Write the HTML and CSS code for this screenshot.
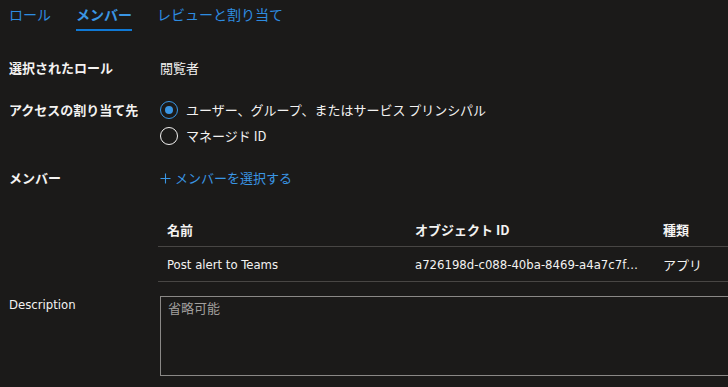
FILE: index.html
```html
<!DOCTYPE html>
<html lang="ja">
<head>
<meta charset="utf-8">
<link rel="stylesheet" href="styles.css">
</head>
<body>
<div class="page">
  <nav class="tabs">
    <span class="tab">ロール</span>
    <span class="tab active">メンバー</span>
    <span class="tab">レビューと割り当て</span>
  </nav>

  <div class="form">
    <div class="row r1">
      <div class="label">選択されたロール</div>
      <div class="value">閲覧者</div>
    </div>

    <div class="row r2">
      <div class="label">アクセスの割り当て先</div>
      <div class="value radios">
        <label class="radio"><span class="dot checked"></span>ユーザー、グループ、またはサービス プリンシパル</label>
        <label class="radio"><span class="dot"></span>マネージド ID</label>
      </div>
    </div>

    <div class="row r3">
      <div class="label">メンバー</div>
      <div class="value"><span class="link"><svg class="plus" width="11" height="11" viewBox="0 0 11 11"><path d="M5.5 0.5V10.5M0.5 5.5H10.5" stroke="#3a96e4" stroke-width="1.1" fill="none"/></svg>メンバーを選択する</span></div>
    </div>

    <div class="row r4">
      <div class="label"></div>
      <div class="value">
        <div class="table">
          <div class="tr th">
            <div class="td">名前</div>
            <div class="td">オブジェクト ID</div>
            <div class="td">種類</div>
          </div>
          <div class="tr">
            <div class="td lat">Post alert to Teams</div>
            <div class="td lat">a726198d-c088-40ba-8469-a4a7c7f7123b</div>
            <div class="td">アプリ</div>
          </div>
        </div>
      </div>
    </div>

    <div class="row r5">
      <div class="label desc lat">Description</div>
      <div class="value">
        <div class="textarea">省略可能</div>
      </div>
    </div>
  </div>
</div>
</body>
</html>
```

FILE: styles.css
```css
html, body {
  margin: 0;
  padding: 0;
  background: #1b1a19;
  overflow: hidden;
}
body {
  width: 728px;
  height: 387px;
  font-family: "Noto Sans CJK JP", "Noto Sans", sans-serif;
  font-size: 13px;
  line-height: 20px;
  color: #f3f2f1;
}
.page {
  padding: 0 0 0 9px;
  width: 900px;
}
.tabs {
  display: flex;
  gap: 25px;
}
.tab {
  color: #2e8ce0;
  padding: 4px 0 5px;
  border-bottom: 2px solid transparent;
  font-size: 14px;
}
.tab.active {
  font-weight: 700;
  color: #3a96e4;
  border-bottom-color: #0f78d4;
}
.form {
  display: flex;
  flex-direction: column;
}
.row {
  display: flex;
}
.label {
  width: 151px;
  flex: none;
  font-weight: 700;
}
.value {
  flex: 1;
}
.r1 { margin-top: 27px; }
.r2 { margin-top: 22px; }
.r3 { margin-top: 22px; }
.r4 { margin-top: 25px; }
.r5 { margin-top: 13px; }
.radios {
  display: flex;
  flex-direction: column;
  gap: 6px;
}
.radio {
  display: flex;
  align-items: center;
  gap: 8px;
}
.dot {
  width: 16px;
  height: 16px;
  border: 1px solid #f3f2f1;
  border-radius: 50%;
  display: flex;
  align-items: center;
  justify-content: center;
}
.dot.checked {
  border-color: #3a96e4;
}
.dot.checked::after {
  content: "";
  width: 8px;
  height: 8px;
  border-radius: 50%;
  background: #3a96e4;
}
.link {
  color: #3a96e4;
  display: inline-flex;
  align-items: center;
}
.plus {
  margin: 0 4px 0 0;
}
.lat {
  font-family: "Liberation Sans Narrow", "DejaVu Sans Condensed", "Noto Sans CJK JP", sans-serif;
}
.table {
  margin-left: -2px;
  width: 740px;
}
.tr {
  display: flex;
  border-bottom: 1px solid #484644;
}
.th {
  font-weight: 700;
  align-items: flex-start;
  padding-top: 6px;
  box-sizing: border-box;
  height: 33px;
}
.tr:not(.th) {
  height: 35px;
  align-items: center;
  box-sizing: border-box;
  padding-top: 2px;
}
.td {
  width: 248px;
  padding: 0 9px;
  box-sizing: border-box;
  white-space: nowrap;
  overflow: hidden;
  text-overflow: ellipsis;
  flex: none;
}
.td:last-child {
  width: 200px;
}
.textarea {
  margin-top: 1px;
  width: 700px;
  height: 80px;
  box-sizing: border-box;
  border: 1px solid #8a8886;
  padding: 1px 7px;
  color: #a19f9d;
}
.desc {
  font-weight: 400;
}
```
